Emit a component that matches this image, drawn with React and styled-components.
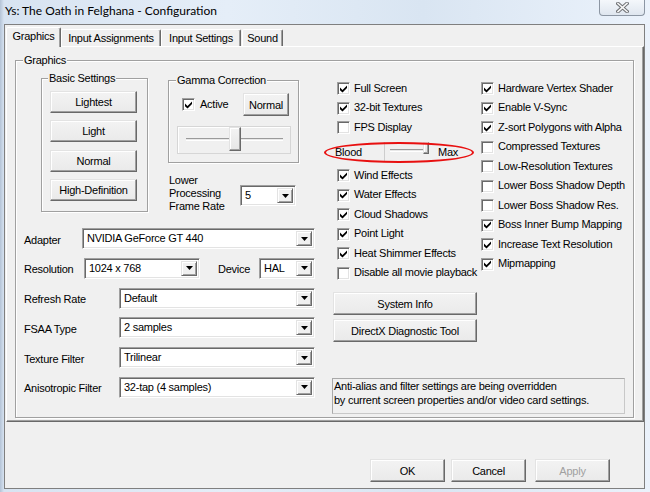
import React from "react";
import styled, { createGlobalStyle } from "styled-components";

const GlobalStyle = createGlobalStyle`
  html, body { margin: 0; padding: 0; }
  body {
    width: 650px; height: 492px; overflow: hidden;
    font-family: "Liberation Sans", Arial, sans-serif;
    font-size: 11px; letter-spacing: -0.25px; color: #000;
  }
  * { box-sizing: border-box; }
`;

const Window = styled.div`
  width: 650px;
  height: 492px;
  display: flex;
  flex-direction: column;
  background: linear-gradient(to right, #b4c3d6 0px, #d7e3f1 4px, #e5eef8 35%, #d9e5f2 65%, #ebf2fb 100%);
`;

const TitleBar = styled.div`
  height: 24px;
  flex: none;
  display: flex;
  align-items: flex-start;
`;

const Title = styled.div`
  font-family: Lato, "Noto Sans", sans-serif;
  font-size: 12px;
  letter-spacing: 0;
  line-height: 16px;
  padding: 3px 0 0 5px;
`;

const CloseButton = styled.div`
  margin-left: auto;
  margin-right: 5px;
  width: 46px;
  height: 16px;
  border: 1px solid #8c96a3;
  border-top: none;
  border-radius: 0 0 4px 4px;
  background: linear-gradient(#f4f7fb, #dfe6ef);
  display: flex;
  align-items: center;
  justify-content: center;
`;

const Client = styled.div`
  flex: 1;
  margin: 0 5px 3px 4px;
  border: 1px solid #7f7f7f;
  background: #f0f0f0;
  display: flex;
  flex-direction: column;
`;

const TabStrip = styled.div`
  height: 21px;
  flex: none;
  display: flex;
  align-items: flex-end;
  padding-left: 1px;
`;

const Tab = styled.div`
  width: ${(p) => p.$w}px;
  height: ${(p) => (p.$active ? 20 : 17)}px;
  margin-left: ${(p) => p.$ml || 0}px;
  margin-bottom: ${(p) => (p.$active ? -1 : 0)}px;
  position: relative;
  z-index: ${(p) => (p.$active ? 2 : 1)};
  background: #f0f0f0;
  border: 1px solid;
  border-bottom: none;
  border-color: #fff #696969 transparent #fff;
  border-radius: 2px 2px 0 0;
  box-shadow: inset -1px 0 0 #a0a0a0;
  text-align: center;
  line-height: 16px;
  padding-top: ${(p) => (p.$active ? 0 : 0)}px;
  white-space: nowrap;
`;

const TabPanel = styled.div`
  height: 376px;
  flex: none;
  margin-left: 1px;
  display: flex;
  flex-direction: column;
  border: 1px solid;
  border-color: #fff #696969 #696969 #fff;
  box-shadow: inset -1px -1px 0 #a0a0a0;
  padding: 13px 9px 3px 8px;
`;

const Group = styled.div`
  position: relative;
  flex: ${(p) => (p.$w ? "none" : 1)};
  width: ${(p) => (p.$w ? `${p.$w}px` : "auto")};
  height: ${(p) => (p.$h ? `${p.$h}px` : "auto")};
  margin-top: ${(p) => p.$mt || 0}px;
  border: 1px solid #a0a0a0;
  box-shadow: inset 1px 1px 0 #fff, 1px 1px 0 #fff;
`;

const Legend = styled.span`
  position: absolute;
  top: -7px;
  left: ${(p) => p.$left}px;
  padding: 0 1px;
  background: #f0f0f0;
  line-height: 13px;
  white-space: nowrap;
`;

const GraphicsBody = styled.div`
  display: flex;
  height: 100%;
`;

const LeftCol = styled.div`
  width: 299px;
  flex: none;
  padding: 17px 0 0 8px;
  display: flex;
  flex-direction: column;
`;

const TopRow = styled.div`
  display: flex;
  align-items: flex-start;
  padding-left: 17px;
`;

const PresetList = styled.div`
  display: flex;
  flex-direction: column;
  gap: 7.3px;
  padding: 12px 0 0 8px;
`;

const Button = styled.button`
  font: inherit;
  letter-spacing: inherit;
  color: ${(p) => (p.disabled ? "#a0a0a0" : "#000")};
  width: ${(p) => p.$w}px;
  height: ${(p) => p.$h || 23}px;
  margin: 0 0 0 ${(p) => p.$ml || 0}px;
  padding: 0;
  flex: none;
  background: linear-gradient(#f3f3f3, #eaeaea);
  border: 1px solid;
  border-color: #e3e3e3 #696969 #696969 #e3e3e3;
  box-shadow: inset -1px -1px 0 #a0a0a0, inset 1px 1px 0 #fff;
`;

const GammaCol = styled.div`
  margin-left: 20px;
  display: flex;
  flex-direction: column;
`;

const ActiveRow = styled.div`
  display: flex;
  align-items: center;
  padding: 12px 9px 0 13px;
`;

const CheckLabel = styled.span`
  position: relative;
  top: -1px;
  margin-left: ${(p) => p.$gap || 4}px;
  white-space: nowrap;
`;

const Box = styled.span`
  width: 13px;
  height: 13px;
  flex: none;
  background: #fff;
  border: 1px solid;
  border-color: #a0a0a0 #fff #fff #a0a0a0;
  box-shadow: inset 1px 1px 0 #696969, inset -1px -1px 0 #e3e3e3;
  display: flex;
  align-items: center;
  justify-content: center;
`;

const PushRight = styled.div`
  margin-left: auto;
`;

const SliderFrame = styled.div`
  position: relative;
  width: 114px;
  height: 28px;
  margin: 10px 0 0 8px;
  border: 1px solid #d6d6d6;
  box-shadow: inset 1px 1px 0 #fff;
  padding: 11px 0 0 8px;
`;

const Track = styled.div`
  width: ${(p) => p.$w}px;
  height: 3px;
  background: #e8e8e8;
  border-top: 1px solid #9a9a9a;
  border-bottom: 1px solid #fff;
`;

const Thumb = styled.div`
  position: absolute;
  top: ${(p) => p.$top}px;
  width: ${(p) => p.$w}px;
  height: ${(p) => p.$h}px;
  background: linear-gradient(#f3f3f3, #e6e6e6);
  border: 1px solid;
  border-color: #e3e3e3 #696969 #696969 #e3e3e3;
  box-shadow: inset -1px -1px 0 #a0a0a0, inset 1px 1px 0 #fff;
`;

const LowerRow = styled.div`
  display: flex;
  align-items: flex-start;
  margin: 11px 0 0 1px;
`;

const LowerLabel = styled.div`
  width: 71px;
  line-height: 13px;
`;

const ComboWrap = styled.div`
  height: 21px;
  flex: ${(p) => (p.$w ? "none" : 1)};
  width: ${(p) => (p.$w ? `${p.$w}px` : "auto")};
  margin-top: ${(p) => p.$mt || 0}px;
  border: 1px solid;
  border-color: #a0a0a0 #fff #fff #a0a0a0;
  box-shadow: inset 1px 1px 0 #696969, inset -1px -1px 0 #e3e3e3;
  background: #fff;
  padding: 2px;
  display: flex;
`;

const ComboText = styled.span`
  flex: 1;
  padding-left: 2px;
  line-height: 15px;
  white-space: nowrap;
  overflow: hidden;
`;

const ComboArrow = styled.span`
  width: 16px;
  flex: none;
  background: #f0f0f0;
  border: 1px solid;
  border-color: #e3e3e3 #696969 #696969 #e3e3e3;
  box-shadow: inset 1px 1px 0 #fff, inset -1px -1px 0 #a0a0a0;
  display: flex;
  align-items: center;
  justify-content: center;
`;

const DropRows = styled.div`
  display: flex;
  flex-direction: column;
  gap: 8.8px;
  margin-top: 15px;
`;

const DropRow = styled.div`
  height: 21px;
  display: flex;
  align-items: center;
`;

const RowLabel = styled.span`
  width: ${(p) => p.$w}px;
  margin-left: ${(p) => p.$ml || 0}px;
  margin-top: 2px;
  flex: none;
  white-space: nowrap;
`;

const RightCol = styled.div`
  flex: 1;
  padding: 18px 0 0 17px;
  display: flex;
  flex-direction: column;
`;

const Columns = styled.div`
  display: flex;
`;

const CheckCol = styled.div`
  width: ${(p) => (p.$w ? `${p.$w}px` : "auto")};
  flex: ${(p) => (p.$w ? "none" : 1)};
  display: flex;
  flex-direction: column;
`;

const CheckRow = styled.div`
  height: 19.5px;
  display: flex;
  align-items: center;
  padding-left: ${(p) => p.$pl || 0}px;
`;

const BloodRow = styled.div`
  position: relative;
  height: 28.5px;
  display: flex;
  align-items: center;
  padding-left: 3px;
`;

const BloodLabel = styled.span`
  width: 49px;
  flex: none;
`;

const MiniSlider = styled.div`
  position: relative;
  width: 50px;
  height: 20px;
  flex: none;
  border-left: 1px solid #cdcdcd;
  display: flex;
  align-items: center;
  padding: 0 0 2px 5px;
`;

const MaxLabel = styled.span`
  margin-left: 4px;
`;

const Highlight = styled.div`
  position: absolute;
  left: -8px;
  top: 4px;
  width: 150px;
  height: 21px;
  border: 2px solid #e81010;
  border-radius: 50%;
  pointer-events: none;
`;

const ToolButtons = styled.div`
  display: flex;
  flex-direction: column;
  gap: 4px;
  margin-top: 9px;
  padding-left: 1px;
`;

const InfoBox = styled.div`
  width: 293px;
  height: 36px;
  margin-top: 36px;
  border: 1px solid #a9a9a9;
  border-right-color: #c8c8c8;
  border-bottom-color: #c8c8c8;
  padding: 0 0 0 1px;
  line-height: 14px;
  white-space: nowrap;
`;

const BottomBar = styled.div`
  flex: 1;
  display: flex;
  justify-content: flex-end;
  align-items: flex-end;
  padding: 0 34px 6px 0;
`;

const CheckMark = () => (
  <svg width="7" height="8" viewBox="0 0 7 8">
    <path d="M0 2.6 L2.5 5 L7 0.4 L7 3 L2.5 7.6 L0 5.2 Z" fill="#000" />
  </svg>
);

const Check = ({ on, label, gap }) => (
  <>
    <Box>{on && <CheckMark />}</Box>
    {label && <CheckLabel $gap={gap}>{label}</CheckLabel>}
  </>
);

const Arrow = () => (
  <svg width="7" height="4" viewBox="0 0 7 4">
    <polygon points="0,0 7,0 3.5,4" fill="#000" />
  </svg>
);

const Combo = ({ value, w, mt }) => (
  <ComboWrap $w={w} $mt={mt}>
    <ComboText>{value}</ComboText>
    <ComboArrow>
      <Arrow />
    </ComboArrow>
  </ComboWrap>
);

const CloseGlyph = () => (
  <svg width="13" height="11" viewBox="0 0 13 11">
    <path d="M2 1.5 L11 9.5 M11 1.5 L2 9.5" stroke="#6e7074" strokeWidth="3.6" strokeLinecap="square" />
    <path d="M2 1.5 L11 9.5 M11 1.5 L2 9.5" stroke="#f7f7f7" strokeWidth="1.6" strokeLinecap="square" />
  </svg>
);

const tabs = [
  { label: "Graphics", w: 55, active: true },
  { label: "Input Assignments", w: 100 },
  { label: "Input Settings", w: 80 },
  { label: "Sound", w: 41, ml: 1 },
];

const col1Top = [
  ["Full Screen", true],
  ["32-bit Textures", true],
  ["FPS Display", false],
];
const col1Bottom = [
  ["Wind Effects", true],
  ["Water Effects", true],
  ["Cloud Shadows", true],
  ["Point Light", true],
  ["Heat Shimmer Effects", true],
  ["Disable all movie playback", false],
];
const col2 = [
  ["Hardware Vertex Shader", true],
  ["Enable V-Sync", true],
  ["Z-sort Polygons with Alpha", true],
  ["Compressed Textures", false],
  ["Low-Resolution Textures", false],
  ["Lower Boss Shadow Depth", false],
  ["Lower Boss Shadow Res.", false],
  ["Boss Inner Bump Mapping", true],
  ["Increase Text Resolution", true],
  ["Mipmapping", true],
];

const dropRows = [
  ["Refresh Rate", "Default"],
  ["FSAA Type", "2 samples"],
  ["Texture Filter", "Trilinear"],
  ["Anisotropic Filter", "32-tap (4 samples)"],
];

const gamma = 0.5;
const blood = 1;

export default function App() {
  return (
    <>
      <GlobalStyle />
      <Window>
        <TitleBar>
          <Title>Ys: The Oath in Felghana - Configuration</Title>
          <CloseButton>
            <CloseGlyph />
          </CloseButton>
        </TitleBar>
        <Client>
          <TabStrip>
            {tabs.map((t) => (
              <Tab key={t.label} $w={t.w} $active={t.active} $ml={t.ml}>
                {t.label}
              </Tab>
            ))}
          </TabStrip>
          <TabPanel>
            <Group>
              <Legend $left={7}>Graphics</Legend>
              <GraphicsBody>
                <LeftCol>
                  <TopRow>
                    <Group $w={107} $h={134}>
                      <Legend $left={6}>Basic Settings</Legend>
                      <PresetList>
                        {["Lightest", "Light", "Normal", "High-Definition"].map((b) => (
                          <Button key={b} $w={87} $h={22}>
                            {b}
                          </Button>
                        ))}
                      </PresetList>
                    </Group>
                    <GammaCol>
                      <Group $w={131} $h={83} $mt={2}>
                        <Legend $left={7}>Gamma Correction</Legend>
                        <ActiveRow>
                          <Check on label="Active" gap={5} />
                          <PushRight>
                            <Button $w={46} $h={23}>Normal</Button>
                          </PushRight>
                        </ActiveRow>
                        <SliderFrame>
                          <Track $w={97} />
                          <Thumb $top={0} $w={12} $h={24} style={{ left: 8 + gamma * 97 - 6 }} />
                        </SliderFrame>
                      </Group>
                      <LowerRow>
                        <LowerLabel>
                          Lower
                          <br />
                          Processing
                          <br />
                          Frame Rate
                        </LowerLabel>
                        <Combo value="5" w={56} mt={11} />
                      </LowerRow>
                    </GammaCol>
                  </TopRow>
                  <DropRows>
                    <DropRow>
                      <RowLabel $w={58}>Adapter</RowLabel>
                      <Combo value="NVIDIA GeForce GT 440" />
                    </DropRow>
                    <DropRow>
                      <RowLabel $w={60}>Resolution</RowLabel>
                      <Combo value="1024 x 768" w={116} />
                      <RowLabel $w={41} $ml={18}>Device</RowLabel>
                      <Combo value="HAL" />
                    </DropRow>
                    {dropRows.map(([l, v]) => (
                      <DropRow key={l}>
                        <RowLabel $w={95}>{l}</RowLabel>
                        <Combo value={v} />
                      </DropRow>
                    ))}
                  </DropRows>
                </LeftCol>
                <RightCol>
                  <Columns>
                    <CheckCol $w={149}>
                      {col1Top.map(([l, on]) => (
                        <CheckRow key={l} $pl={5}>
                          <Check on={on} label={l} />
                        </CheckRow>
                      ))}
                      <BloodRow>
                        <BloodLabel>Blood</BloodLabel>
                        <MiniSlider>
                          <Track $w={38} />
                          <Thumb $top={0} $w={6} $h={12} style={{ left: 4 + blood * 34 }} />
                        </MiniSlider>
                        <MaxLabel>Max</MaxLabel>
                        <Highlight />
                      </BloodRow>
                      {col1Bottom.map(([l, on]) => (
                        <CheckRow key={l} $pl={5}>
                          <Check on={on} label={l} />
                        </CheckRow>
                      ))}
                      <ToolButtons>
                        <Button $w={144} $h={23}>System Info</Button>
                        <Button $w={144} $h={23}>DirectX Diagnostic Tool</Button>
                      </ToolButtons>
                    </CheckCol>
                    <CheckCol>
                      {col2.map(([l, on]) => (
                        <CheckRow key={l}>
                          <Check on={on} label={l} />
                        </CheckRow>
                      ))}
                    </CheckCol>
                  </Columns>
                  <InfoBox>
                    Anti-alias and filter settings are being overridden
                    <br />
                    by current screen properties and/or video card settings.
                  </InfoBox>
                </RightCol>
              </GraphicsBody>
            </Group>
          </TabPanel>
          <BottomBar>
            <Button $w={75} $h={23}>OK</Button>
            <Button $w={75} $h={23} $ml={6}>Cancel</Button>
            <Button $w={75} $h={23} $ml={9} disabled>
              Apply
            </Button>
          </BottomBar>
        </Client>
      </Window>
    </>
  );
}
